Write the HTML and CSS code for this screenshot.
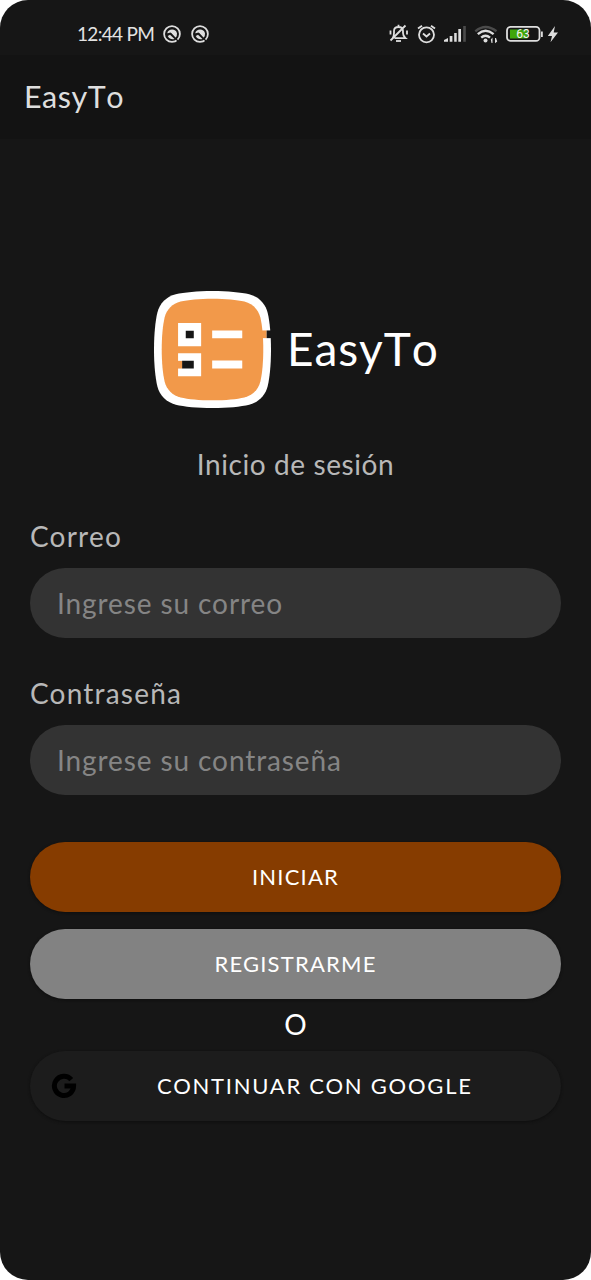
FILE: index.html
```html
<!DOCTYPE html>
<html lang="es">
<head>
<meta charset="utf-8">
<title>EasyTo</title>
<link rel="stylesheet" href="styles.css">
</head>
<body>
<div class="screen">
  <div class="status">
    <span class="time">12:44 PM</span>
    <svg class="badge" viewBox="0 0 18 18"><circle cx="9" cy="9" r="7.9" class="line"/><path d="M4.2 8.2A5.1 5.1 0 0 1 14 8.2Q14.200 11 12.700 12.700L8.600 8.200Q7.200 6.900 5.900 8.100Z" class="solid"/><path d="M4.700 11L7 9.700L11.500 14Q7.200 15.300 4.700 11Z" class="solid"/><path d="M12 13L15.500 16.500" class="gap"/></svg>
    <svg class="badge second" viewBox="0 0 18 18"><circle cx="9" cy="9" r="7.9" class="line"/><path d="M4.2 8.2A5.1 5.1 0 0 1 14 8.2Q14.200 11 12.700 12.700L8.600 8.200Q7.200 6.900 5.900 8.100Z" class="solid"/><path d="M4.700 11L7 9.700L11.500 14Q7.200 15.300 4.700 11Z" class="solid"/><path d="M12 13L15.500 16.500" class="gap"/></svg>
    <svg class="tray" viewBox="0 0 221 80">
      <g class="line">
        <path d="M22.500 38.200Q24 36 24 33V31Q24 27 28.500 27Q33 27 33 31V33Q33 36 35.500 38.200H24.500M28.500 24.800V27M20.500 30.500V34.500M37 30.500V34.500M20.500 40.500L35.500 25.500"/>
        <path d="M26 41H31" />
        <circle cx="56.500" cy="34.800" r="7.500"/>
        <path d="M53 33.500L56.500 36.500L60 33.500M48 28.600L52 25.700M61 25.700L65 28.600"/>
      </g>
      <g class="solid">
        <path d="M74 41.800V40L78 38V41.800ZM79.700 36H82.400V41.800H79.700ZM84.200 33H86.700V41.800H84.200ZM88.300 29H91V41.800H88.300Z"/>
        <path class="dim" d="M93.200 26H95.800V41.800H93.200Z"/>
        <circle cx="115.500" cy="40.500" r="2"/>
        <path d="M122.500 37.500V43H121.500L120.800 39.500ZM125 38H126V38L127.200 41.500L125 43.300Z"/>
        <path d="M185 26L177.800 36H182L180.500 42.300L188 32.500H183.700Z"/>
        <rect x="171" y="31.500" width="1.800" height="5.500"/>
      </g>
      <path class="arc dim-line" d="M105.300 31.300Q115.500 22.700 126.500 31.300"/>
      <path class="arc" d="M107.800 34.200Q115.500 27.500 123.600 34.200M111.200 37.600Q115.500 33.800 120 37.600"/>
      <rect class="line" x="137" y="26.900" width="32.500" height="14" rx="3.500"/>
      <path class="charge" d="M140 29.500H157.500V38.500H140Z"/>
      <text class="percent" x="153" y="38.300" text-anchor="middle">63</text>
    </svg>
  </div>
  <header class="bar">EasyTo</header>
  <main class="content">
    <div class="brand">
      <svg class="logo" viewBox="-175 -175 350 350">
        <defs><path id="tile" d="M0-175C45-175 85-171 110-165C138-158 158-138 165-110C171-85 175-45 175 0C175 45 171 85 165 110C158 138 138 158 110 165C85 171 45 175 0 175C-45 175-85 171-110 165C-138 158-158 138-165 110C-171 85-175 45-175 0C-175-45-171-85-165-110C-158-138-138-158-110-165C-85-171-45-175 0-175Z"/></defs>
        <use href="#tile" fill="#fff"/>
        <use href="#tile" fill="#f2994a" transform="scale(.868)"/>
        <path fill="#f2994a" d="M146-57H162V-34H146Z"/>
        <path fill="#161616" d="M162-57H176V-34H162Z"/>
        <path fill="#fff" d="M-103-79H-34V-10H-103ZM-103 11H-34V80H-103ZM-1-57H89V-34H-1ZM-1 33H89V57H-1Z"/>
        <path fill="#161616" d="M-80-56H-56V-34H-80ZM-91 34H-56V57H-91Z"/>
        <path fill="#f2994a" d="M-104 34H-91V57H-104Z"/>
      </svg>
      <h1 class="name">EasyTo</h1>
    </div>
    <h2 class="subtitle">Inicio de sesión</h2>
    <form class="form">
      <label class="label mail" for="mail">Correo</label>
      <input class="field" id="mail" type="text" placeholder="Ingrese su correo">
      <label class="label pass" for="pass">Contraseña</label>
      <input class="field secret" id="pass" type="password" placeholder="Ingrese su contraseña">
      <button class="button primary" type="button"><span>INICIAR</span></button>
      <button class="button secondary" type="button"><span>REGISTRARME</span></button>
      <div class="or">O</div>
      <button class="button google" type="button">
        <svg class="g" viewBox="0 0 26 26"><path d="M20.300 6.700A9.600 9.600 0 1 0 22.600 13H13.500"/></svg>
        <span>CONTINUAR CON GOOGLE</span>
      </button>
    </form>
  </main>
</div>
</body>
</html>
```
FILE: styles.css
```css
* { box-sizing: border-box; }
body { margin: 0; background: #fff; font-family: Lato, sans-serif; }
.screen { width: 591px; height: 1280px; border-radius: 28px; background: #161616; overflow: hidden; }
.status { height: 55px; display: flex; align-items: flex-start; padding-left: 77px; color: #e2e2e2; }
.time { width: 86px; padding-top: 22px; font-size: 19px; line-height: 24px; letter-spacing: -.7px; white-space: nowrap; }
.badge { width: 18px; height: 18px; margin-top: 25px; flex: none; }
.second { margin-left: 10px; }
.tray { width: 221px; height: 80px; margin-left: auto; flex: none; }
.line { fill: none; stroke: #dedede; stroke-width: 1.8; }
.solid { fill: #dedede; }
.gap { stroke: #161616; stroke-width: 1.2; }
.dim { fill: #4b4b4b; }
.arc { fill: none; stroke: #dedede; stroke-width: 2.4; }
.dim-line { stroke: #4b4b4b; }
.charge { fill: #3fa60c; }
.percent { font: 12px Roboto, sans-serif; fill: #f4f4f4; }
.bar { height: 84px; padding: 23px 24px; background: #131313; color: #dedede; font-size: 30.5px; line-height: 36px; font-kerning: none; letter-spacing: .5px; }
.content { padding: 152px 30px 0; }
.brand { display: flex; height: 117px; margin-left: 124px; }
.logo { width: 117px; height: 117px; flex: none; }
.name { margin: 28px 0 0 16px; color: #fff; font-size: 46px; line-height: 60px; font-weight: 400; font-kerning: none; letter-spacing: .9px; }
.subtitle { margin: 39px 0 0; text-align: center; color: #b8b8b8; font-size: 28px; line-height: 34px; font-weight: 400; letter-spacing: .6px; }
.form { display: flex; flex-direction: column; }
.label { color: #b8b8b8; font-size: 28px; line-height: 34px; letter-spacing: 1.2px; }
.mail { margin-top: 38px; }
.pass { margin-top: 38px; }
.field { width: 531px; height: 70px; margin-top: 15px; padding: 0 27px; border: 0; border-radius: 35px; background: #333; font: 28px Lato, sans-serif; letter-spacing: .9px; color: #ddd; }
.field::placeholder { color: #858585; opacity: 1; }
.button { display: flex; align-items: center; justify-content: center; width: 531px; height: 70px; padding: 0 0 1px; border: 0; border-radius: 35px; color: #fff; font: 22px Lato, sans-serif; letter-spacing: 1.2px; box-shadow: 0 1px 3px #0e0e0e; }
.primary { margin-top: 47px; background: #863c00; }
.secondary { margin-top: 17px; background: #828282; }
.or { height: 52px; text-align: center; color: #fff; font-size: 28px; line-height: 51px; }
.google { background: #1c1c1c; justify-content: flex-start; padding-left: 21px; letter-spacing: 1.75px; }
.google span { margin-left: 80px; }
.g { width: 26px; height: 26px; fill: none; stroke: #000; stroke-width: 5; }
```
